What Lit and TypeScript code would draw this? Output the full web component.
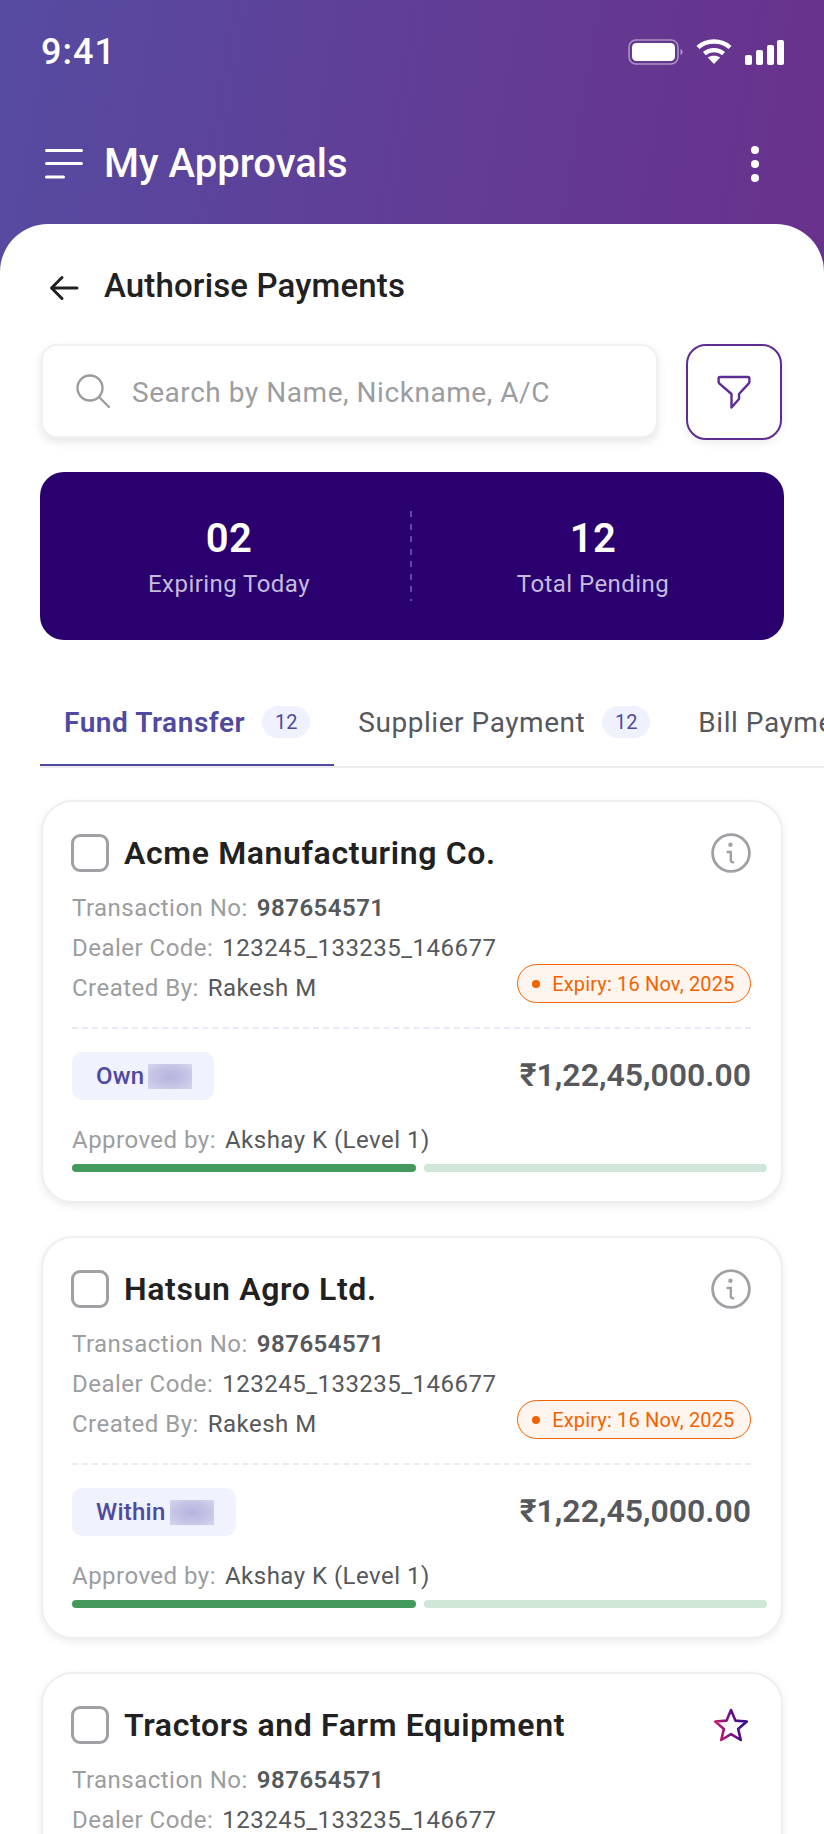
import { html, LitElement, css, svg } from "lit";
import { customElement } from "lit/decorators.js";

const infoIcon = svg`<svg class="side-icon" width="40" height="40" viewBox="0 0 40 40" fill="none">
  <circle cx="20" cy="20" r="18.4" stroke="#a0a1a5" stroke-width="2.8"/>
  <circle cx="19.4" cy="11.8" r="2.2" fill="#a0a1a5"/>
  <path d="M16.6 19h3.2v8c0 1.4.8 2.2 2.4 2.4" stroke="#a0a1a5" stroke-width="2.4" stroke-linecap="round"/>
</svg>`;

const starIcon = svg`<svg class="side-icon" width="40" height="40" viewBox="0 0 40 40" fill="none">
  <defs>
    <linearGradient id="star-grad" x1="0" y1="0.6" x2="1" y2="0.4">
      <stop offset="0" stop-color="#c8206a"/>
      <stop offset="0.55" stop-color="#6a1088"/>
      <stop offset="1" stop-color="#2a0a8e"/>
    </linearGradient>
  </defs>
  <path d="M20 5l4.4 10.6 11.4.9-8.7 7.4 2.7 11.1L20 29.1 10.2 35l2.7-11.1-8.7-7.4 11.4-.9z" stroke="url(#star-grad)" stroke-width="2.6" stroke-linejoin="round"/>
</svg>`;

interface Approval {
  name: string;
  tag: string;
  blur: number;
  icon: "info" | "star";
}

const approvals: Approval[] = [
  { name: "Acme Manufacturing Co.", tag: "Own", blur: 44, icon: "info" },
  { name: "Hatsun Agro Ltd.", tag: "Within", blur: 44, icon: "info" },
  { name: "Tractors and Farm Equipment", tag: "Own", blur: 44, icon: "star" },
];

@customElement("app-root")
export class AppRoot extends LitElement {
  static styles = css`
    :host {
      display: block;
      width: 824px;
      height: 1834px;
      overflow: hidden;
      font-family: Roboto, "Liberation Sans", sans-serif;
      background: #fff;
    }

    .page {
      background: linear-gradient(100deg, #564ba1 0%, #633b94 60%, #68318c 100%) no-repeat;
      background-size: 100% 300px;
    }

    .status {
      height: 104px;
      display: flex;
      align-items: center;
      justify-content: space-between;
      padding: 0 40px 0 41px;
      color: #fff;
      font-size: 36px;
      font-weight: 500;
      letter-spacing: 1px;
    }

    .status-icons {
      display: flex;
      align-items: center;
      gap: 13px;
    }

    .appbar {
      height: 120px;
      display: flex;
      align-items: center;
      padding: 0 40px 0 45px;
      color: #fff;
    }

    .appbar h1 {
      flex: 1;
      margin: 0 0 0 21px;
      font-size: 40px;
      font-weight: 500;
      line-height: 44px;
    }

    .kebab {
      margin-right: 24px;
    }

    .sheet {
      background: #fff;
      border-radius: 48px 48px 0 0;
      padding-top: 42px;
    }

    .subhead {
      height: 40px;
      display: flex;
      align-items: center;
      padding-left: 49px;
      gap: 25px;
    }

    .subhead svg {
      margin-top: 4px;
    }

    .subhead h2 {
      margin: -2px 0 0;
      font-size: 33px;
      font-weight: 500;
      color: #212121;
      letter-spacing: 0.15px;
    }

    .search-row {
      display: flex;
      gap: 28px;
      padding: 38px 42px 0 41px;
    }

    .search {
      flex: 1;
      height: 94px;
      box-sizing: border-box;
      display: flex;
      align-items: center;
      gap: 22px;
      padding-left: 33px;
      background: #fff;
      border: 2px solid #f0f0f2;
      border-radius: 16px;
      box-shadow: 0 4px 10px rgba(0, 0, 0, 0.1);
      color: #9c9da1;
      font-size: 28px;
      letter-spacing: 0.55px;
    }

    .search span {
      margin-top: 2px;
    }

    .filter {
      width: 96px;
      height: 96px;
      box-sizing: border-box;
      display: flex;
      align-items: center;
      justify-content: center;
      background: #fff;
      border: 2px solid #5e2d91;
      border-radius: 20px;
      box-shadow: 0 3px 8px rgba(0, 0, 0, 0.08);
    }

    .stats {
      margin: 32px 40px 0;
      height: 168px;
      box-sizing: border-box;
      padding: 0 10px 0 8px;
      display: flex;
      align-items: center;
      background: #2a006e;
      border-radius: 24px;
    }

    .stat {
      flex: 1;
      padding-top: 4px;
      text-align: center;
    }

    .stat-value {
      color: #fff;
      font-size: 40px;
      font-weight: 600;
      line-height: 46px;
      letter-spacing: 0.5px;
    }

    .stat-label {
      margin-top: 6px;
      color: #c5bbdc;
      font-size: 24px;
      line-height: 32px;
      letter-spacing: 0.45px;
    }

    .stat-divider {
      width: 2px;
      height: 90px;
      background: repeating-linear-gradient(to bottom, #5f4ba0 0 6px, transparent 6px 12.5px);
    }

    .tabs {
      margin: 40px 0 0 40px;
      height: 88px;
      box-sizing: border-box;
      display: flex;
      overflow: hidden;
      border-bottom: 2px solid #ececee;
    }

    .tab {
      flex: none;
      display: flex;
      align-items: center;
      gap: 17px;
      height: 86px;
      box-sizing: border-box;
      padding: 0 24px 2px;
      color: #56585c;
      font-size: 28px;
      letter-spacing: 0.55px;
    }

    .tab.active {
      color: #4f4aa0;
      font-weight: 600;
      height: 88px;
      border-bottom: 4px solid #4f4aa0;
      padding-bottom: 0;
    }

    .count {
      width: 48px;
      height: 32px;
      display: flex;
      align-items: center;
      justify-content: center;
      border-radius: 16px;
      background: #eff1fd;
      color: #4f4aa0;
      font-size: 20px;
      font-weight: 400;
      letter-spacing: 0;
    }

    .cards {
      display: flex;
      flex-direction: column;
      gap: 33px;
      padding: 32px 41px 0;
    }

    .card {
      box-sizing: border-box;
      height: 403px;
      flex: none;
      padding: 31px 30px 0 29px;
      background: #fff;
      border: 2px solid #efeff1;
      border-radius: 32px;
      box-shadow: 0 3px 8px rgba(0, 0, 0, 0.08);
    }

    .card-head {
      height: 40px;
      display: flex;
      align-items: center;
    }

    .checkbox {
      width: 38px;
      height: 38px;
      box-sizing: border-box;
      border: 3.5px solid #a0a1a5;
      border-radius: 9px;
      margin-left: -1px;
    }

    .card-head h3 {
      flex: 1;
      margin: 0 0 0 15px;
      font-size: 32px;
      font-weight: 600;
      color: #212121;
      letter-spacing: 0.63px;
    }

    .meta {
      padding-top: 15px;
    }

    .line {
      height: 40px;
      display: flex;
      align-items: center;
      gap: 9px;
      font-size: 24px;
      color: #56585c;
      letter-spacing: 0.48px;
    }

    .line .label {
      color: #9c9da1;
    }

    .line b {
      font-weight: 600;
    }

    .expiry {
      height: 39px;
      box-sizing: border-box;
      margin: -9px 0 0 auto;
      display: flex;
      align-items: center;
      gap: 12px;
      padding: 0 15.5px 0 14px;
      color: #f26300;
      background: #fff5ef;
      border: 1.5px solid #f26300;
      border-radius: 20px;
      font-size: 20px;
      letter-spacing: 0.16px;
    }

    .dot {
      width: 8px;
      height: 8px;
      border-radius: 50%;
      background: #f26300;
    }

    .divider {
      margin-top: 19px;
      border-top: 2px dashed #eaeaf5;
    }

    .amount-row {
      margin-top: 23px;
      display: flex;
      align-items: center;
      justify-content: space-between;
    }

    .tag {
      height: 48px;
      display: flex;
      align-items: center;
      gap: 4px;
      padding: 0 22px 0 24px;
      background: #f0f2fd;
      border-radius: 10px;
      color: #4f4aa0;
      font-size: 24px;
      font-weight: 500;
      letter-spacing: 0.25px;
    }

    .redacted {
      height: 25px;
      background: radial-gradient(ellipse at center, #b6b4de 0%, #c6c5e6 60%, #d6d6ef 100%);
    }

    .amount {
      margin-top: -2px;
      font-size: 32px;
      font-weight: 600;
      color: #56585c;
    }

    .approved {
      margin-top: 20px;
    }

    .progress {
      display: flex;
      gap: 8px;
      margin: 4px -16px 0 0;
    }

    .bar {
      flex: 1;
      height: 8px;
      border-radius: 4px;
      background: #439a5c;
    }

    .bar.pending {
      background: #d0e7d8;
    }
  `;

  private renderCard(item: Approval) {
    return html`<div class="card">
      <div class="card-head">
        <div class="checkbox"></div>
        <h3>${item.name}</h3>
        ${item.icon === "info" ? infoIcon : starIcon}
      </div>
      <div class="meta">
        <div class="line">
          <span class="label">Transaction No:</span><b>987654571</b>
        </div>
        <div class="line">
          <span class="label">Dealer Code:</span><span>123245_133235_146677</span>
        </div>
        <div class="line">
          <span class="label">Created By:</span><span>Rakesh M</span>
          <div class="expiry"><span class="dot"></span>Expiry: 16 Nov, 2025</div>
        </div>
      </div>
      <div class="divider"></div>
      <div class="amount-row">
        <div class="tag">
          ${item.tag}<span class="redacted" style="width: ${item.blur}px"></span>
        </div>
        <div class="amount">₹1,22,45,000.00</div>
      </div>
      <div class="line approved">
        <span class="label">Approved by:</span><span>Akshay K (Level 1)</span>
      </div>
      <div class="progress">
        <div class="bar"></div>
        <div class="bar pending"></div>
      </div>
    </div>`;
  }

  render() {
    return html`<div class="page">
      <div class="status">
        <span>9:41</span>
        <div class="status-icons">
          <svg width="55" height="26" viewBox="0 0 55 26" fill="none">
            <rect x="1" y="1" width="49" height="24" rx="7" stroke="#fff" stroke-opacity="0.45" stroke-width="1.6"/>
            <rect x="4" y="4" width="43" height="18" rx="4.5" fill="#fff"/>
            <path d="M52.5 10v6c1.2-.4 2-1.6 2-3s-.8-2.6-2-3z" fill="#fff" fill-opacity="0.5"/>
          </svg>
          <svg width="36" height="26" viewBox="0 0 36 26" fill="none">
            <path d="M2 8.5C10.5 .5 25.5 .5 34 8.5" stroke="#fff" stroke-width="4.4"/>
            <path d="M8.4 14.6c5.5-4.6 13.7-4.6 19.2 0" stroke="#fff" stroke-width="4.4"/>
            <path d="M18 25l-6.2-6.4c3.5-2.6 8.9-2.6 12.4 0z" fill="#fff"/>
          </svg>
          <svg width="39" height="25" viewBox="0 0 39 25" fill="#fff">
            <rect x="0" y="15" width="7" height="10" rx="2"/>
            <rect x="11" y="10" width="7" height="15" rx="2"/>
            <rect x="22" y="5" width="7" height="20" rx="2"/>
            <rect x="32" y="0" width="7" height="25" rx="2"/>
          </svg>
        </div>
      </div>
      <div class="appbar">
        <svg width="38" height="30" viewBox="0 0 38 30" fill="none" stroke="#fff" stroke-width="3" stroke-linecap="round">
          <path d="M1.5 1.5h35M1.5 14.5h35M1.5 28h17"/>
        </svg>
        <h1>My Approvals</h1>
        <svg class="kebab" width="10" height="38" viewBox="0 0 10 38" fill="#fff">
          <circle cx="5" cy="5" r="4"/><circle cx="5" cy="19" r="4"/><circle cx="5" cy="33" r="4"/>
        </svg>
      </div>
      <div class="sheet">
        <div class="subhead">
          <svg width="30" height="26" viewBox="0 0 30 26" fill="none" stroke="#212121" stroke-width="3" stroke-linecap="round" stroke-linejoin="round">
            <path d="M28 13H3M13 2.5L2.5 13 13 23.5"/>
          </svg>
          <h2>Authorise Payments</h2>
        </div>
        <div class="search-row">
          <div class="search">
            <svg width="34" height="34" viewBox="0 0 34 34" fill="none" stroke="#9c9da1" stroke-width="2.4" stroke-linecap="round">
              <circle cx="14" cy="14" r="12.5"/><path d="M23.5 23.5L33 33"/>
            </svg>
            <span>Search by Name, Nickname, A/C</span>
          </div>
          <div class="filter">
            <svg width="34" height="34" viewBox="0 0 34 34" fill="none" stroke="#5e2d91" stroke-width="2.4" stroke-linejoin="round">
              <path d="M3 2h28c.8 0 1.4.6 1.4 1.4V7c0 .6-.2 1-.6 1.4L22 19v5l-7.5 8.5V19L2.2 8.4C1.800 8 1.600 7.600 1.600 7V3.400C1.600 2.600 2.200 2 3 2z"/>
            </svg>
          </div>
        </div>
        <div class="stats">
          <div class="stat">
            <div class="stat-value">02</div>
            <div class="stat-label">Expiring Today</div>
          </div>
          <div class="stat-divider"></div>
          <div class="stat">
            <div class="stat-value">12</div>
            <div class="stat-label">Total Pending</div>
          </div>
        </div>
        <div class="tabs">
          <div class="tab active">Fund Transfer<span class="count">12</span></div>
          <div class="tab">Supplier Payment<span class="count">12</span></div>
          <div class="tab">Bill Payments</div>
        </div>
        <div class="cards">${approvals.map((item) => this.renderCard(item))}</div>
      </div>
    </div>`;
  }
}

declare global {
  interface HTMLElementTagNameMap {
    "app-root": AppRoot;
  }
}
